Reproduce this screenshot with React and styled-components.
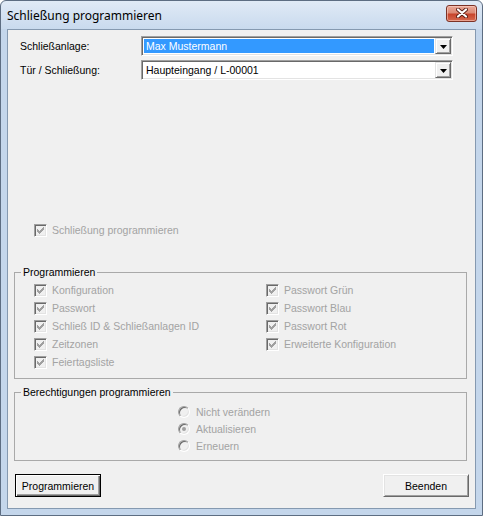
import React from "react";
import styled, { createGlobalStyle } from "styled-components";

const GlobalStyle = createGlobalStyle`
  html, body {
    margin: 0;
    padding: 0;
    background: #ffffff;
  }
  body {
    font-family: "Liberation Sans", Arial, sans-serif;
    font-size: 10.5px;
    color: #000;
  }
`;

const leftChecks = [
  "Konfiguration",
  "Passwort",
  "Schließ ID & Schließanlagen ID",
  "Zeitzonen",
  "Feiertagsliste",
];
const rightChecks = [
  "Passwort Grün",
  "Passwort Blau",
  "Passwort Rot",
  "Erweiterte Konfiguration",
];
const radios = [
  { label: "Nicht verändern", checked: false },
  { label: "Aktualisieren", checked: true },
  { label: "Erneuern", checked: false },
];

function CheckMark() {
  return (
    <svg width="7" height="7" viewBox="0 0 7 7">
      <path d="M0 2h1v1h1v1h1v-1h1v-1h1v-1h1v-1h1v3h-1v1h-1v1h-1v1h-1v1h-1v-1h-1v-1h-1z" fill="#a0a0a0" />
    </svg>
  );
}

function Arrow() {
  return (
    <svg width="7" height="4" viewBox="0 0 7 4">
      <path d="M0 0h7L3.5 4z" fill="#000" />
    </svg>
  );
}

function CloseGlyph() {
  return (
    <svg width="12" height="10" viewBox="0 0 12 10">
      <path d="M2 1.5L10 8.5M10 1.5L2 8.5" stroke="#5a1d14" strokeWidth="4" strokeLinecap="round" />
      <path d="M2 1.5L10 8.5M10 1.5L2 8.5" stroke="#ffffff" strokeWidth="2.2" strokeLinecap="round" />
    </svg>
  );
}

function Check({ label }) {
  return (
    <CheckRow>
      <CheckBox>
        <CheckMark />
      </CheckBox>
      <DisabledText>{label}</DisabledText>
    </CheckRow>
  );
}

function Combo({ value, selected }) {
  return (
    <ComboBox>
      <ComboValue $selected={selected}>{value}</ComboValue>
      <DropButton>
        <Arrow />
      </DropButton>
    </ComboBox>
  );
}

export default function App() {
  return (
    <>
      <GlobalStyle />
      <Window>
        <TitleBar>
          <Title>Schließung programmieren</Title>
          <CloseButton>
            <CloseGlyph />
          </CloseButton>
        </TitleBar>
        <Frame>
          <Client>
            <FormGrid>
              <Label>Schließanlage:</Label>
              <Combo value="Max Mustermann" selected />
              <Label>Tür / Schließung:</Label>
              <Combo value="Haupteingang / L-00001" />
            </FormGrid>

            <TopCheck>
              <Check label="Schließung programmieren" />
            </TopCheck>

            <Group>
              <Legend>Programmieren</Legend>
              <Columns>
                <Column>
                  {leftChecks.map((c) => (
                    <Check key={c} label={c} />
                  ))}
                </Column>
                <Column>
                  {rightChecks.map((c) => (
                    <Check key={c} label={c} />
                  ))}
                </Column>
              </Columns>
            </Group>

            <Group $second>
              <Legend>Berechtigungen programmieren</Legend>
              <RadioList>
                {radios.map((r) => (
                  <RadioRow key={r.label}>
                    <Radio $checked={r.checked} />
                    <DisabledText>{r.label}</DisabledText>
                  </RadioRow>
                ))}
              </RadioList>
            </Group>

            <ButtonRow>
              <Button $default>Programmieren</Button>
              <Button>Beenden</Button>
            </ButtonRow>
          </Client>
        </Frame>
      </Window>
    </>
  );
}

const Window = styled.div`
  width: 483px;
  height: 516px;
  box-sizing: border-box;
  border: 1px solid #5d6d82;
  border-radius: 6px 6px 0 0;
  background: linear-gradient(#e0eaf6 0, #c9daee 28px, #c4d6eb 28px);
  display: flex;
  flex-direction: column;
  overflow: hidden;
`;

const TitleBar = styled.div`
  height: 28px;
  flex: none;
  display: flex;
  align-items: center;
  justify-content: space-between;
  padding: 0 5px 0 6px;
`;

const Title = styled.div`
  font-family: "Noto Sans", "Liberation Sans", sans-serif;
  font-size: 12px;
  color: #000;
  padding-top: 1px;
`;

const CloseButton = styled.div`
  width: 31px;
  height: 17px;
  box-sizing: border-box;
  margin-top: -4px;
  border: 1px solid #7c3226;
  border-radius: 3px;
  background: linear-gradient(#eaa898 0%, #dc8a75 45%, #c8442b 55%, #d6694f 100%);
  box-shadow: inset 0 0 0 1px rgba(255, 220, 210, 0.5);
  display: flex;
  align-items: center;
  justify-content: center;
`;

const Frame = styled.div`
  flex: 1;
  display: flex;
  padding: 0 6px 6px;
`;

const Client = styled.div`
  flex: 1;
  display: flex;
  flex-direction: column;
  border: 1px solid #8599b0;
  background: #f0f0f0;
  padding: 6px 8px 0 6px;
`;

const FormGrid = styled.div`
  display: grid;
  grid-template-columns: 121px 312px;
  grid-auto-rows: 20px;
  row-gap: 4px;
  margin-left: 6px;
  align-items: center;
`;

const Label = styled.div`
  color: #000;
`;

const ComboBox = styled.div`
  box-sizing: border-box;
  height: 20px;
  display: flex;
  padding: 1px;
  background: #fff;
  border: 1px solid;
  border-color: #a0a0a0 #ffffff #ffffff #a0a0a0;
  box-shadow: inset 1px 1px 0 #696969, inset -1px -1px 0 #e3e3e3;
`;

const ComboValue = styled.div`
  flex: 1;
  margin: 1px;
  padding-left: 2px;
  line-height: 14px;
  background: ${(p) => (p.$selected ? "#3399ff" : "transparent")};
  color: ${(p) => (p.$selected ? "#fff" : "#000")};
`;

const DropButton = styled.div`
  width: 16px;
  height: 16px;
  box-sizing: border-box;
  background: #f0f0f0;
  border: 1px solid;
  border-color: #e3e3e3 #696969 #696969 #e3e3e3;
  box-shadow: inset 1px 1px 0 #fff, inset -1px -1px 0 #a0a0a0;
  display: flex;
  align-items: center;
  justify-content: center;
  padding-top: 1px;
`;

const TopCheck = styled.div`
  margin-top: 141px;
  padding-left: 20px;
`;

const CheckRow = styled.div`
  height: 18px;
  display: flex;
  align-items: center;
  gap: 5px;
`;

const CheckBox = styled.div`
  width: 13px;
  height: 13px;
  flex: none;
  box-sizing: border-box;
  background: #f0f0f0;
  border: 1px solid;
  border-color: #a0a0a0 #ffffff #ffffff #a0a0a0;
  box-shadow: inset 1px 1px 0 #696969, inset -1px -1px 0 #e3e3e3;
  display: flex;
  align-items: center;
  justify-content: center;
`;

const DisabledText = styled.span`
  color: #a3a3a3;
  white-space: nowrap;
`;

const Group = styled.fieldset`
  margin: ${(p) => (p.$second ? "7px" : "27px")} 0 0 0;
  padding: 0;
  min-width: 0;
  border: 1px solid #a9a9a9;
  border-radius: 0;
`;

const Legend = styled.legend`
  margin-left: 6px;
  padding: 0 2px;
  line-height: 13px;
  color: #000;
`;

const Columns = styled.div`
  display: grid;
  grid-template-columns: 232px 1fr;
  padding: 2px 0 7px 19px;
`;

const Column = styled.div`
  display: flex;
  flex-direction: column;
`;

const RadioList = styled.div`
  display: flex;
  flex-direction: column;
  padding: 4px 0 6px 163px;
`;

const RadioRow = styled.div`
  height: 17px;
  display: flex;
  align-items: center;
  gap: 6px;
`;

const Radio = styled.div`
  position: relative;
  width: 12px;
  height: 12px;
  flex: none;
  box-sizing: border-box;
  border-radius: 50%;
  background: #f0f0f0;
  border: 1px solid;
  border-color: #a0a0a0 #ffffff #ffffff #a0a0a0;
  box-shadow: inset 1px 1px 0 #696969, inset -1px -1px 0 #e3e3e3;
  &::after {
    content: "";
    display: ${(p) => (p.$checked ? "block" : "none")};
    position: absolute;
    left: 3px;
    top: 3px;
    width: 4px;
    height: 4px;
    border-radius: 50%;
    background: #a0a0a0;
  }
`;

const ButtonRow = styled.div`
  display: flex;
  justify-content: space-between;
  margin: 13px -2px 0 1px;
`;

const Button = styled.button`
  width: 86px;
  height: 23px;
  box-sizing: border-box;
  padding: 0;
  font-family: "Liberation Sans", Arial, sans-serif;
  font-size: 10.5px;
  color: #000;
  background: #f0f0f0;
  border-radius: 0;
  border: 1px solid;
  border-color: ${(p) => (p.$default ? "#000" : "#fff #696969 #696969 #fff")};
  box-shadow: ${(p) =>
    p.$default
      ? "inset 1px 1px 0 #fff, inset -1px -1px 0 #696969, inset -2px -2px 0 #a0a0a0"
      : "inset 1px 1px 0 #e3e3e3, inset -1px -1px 0 #a0a0a0"};
`;
